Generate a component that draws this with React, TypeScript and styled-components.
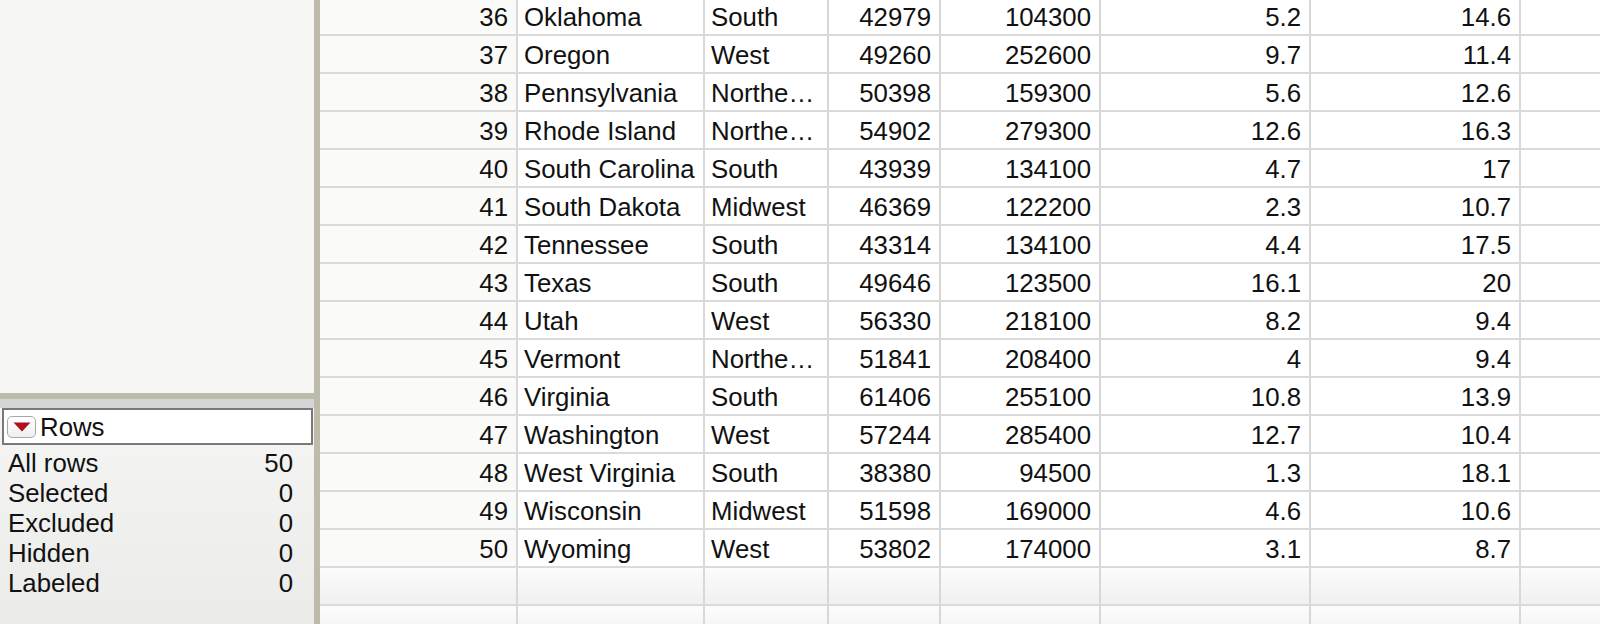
import React from "react";
import styled, { createGlobalStyle } from "styled-components";

const GlobalStyle = createGlobalStyle`
  html, body { margin: 0; padding: 0; }
  body {
    width: 1600px;
    height: 624px;
    overflow: hidden;
    font-family: "Liberation Sans", Arial, Helvetica, sans-serif;
    color: #111;
  }
`;

const Page = styled.div`
  display: flex;
  width: 1600px;
  height: 624px;
  overflow: hidden;
  font-size: 25.8px;
`;

const LeftPanel = styled.div`
  width: 314px;
  flex: none;
  display: flex;
  flex-direction: column;
`;

const TopArea = styled.div`
  height: 393px;
  flex: none;
  background: #f6f6f4;
`;

const HSplitter = styled.div`
  height: 6px;
  flex: none;
  background: #bdbcab;
`;

const HeaderStrip = styled.div`
  height: 9px;
  flex: none;
  background: #d5d5d7;
`;

const LowerPanel = styled.div`
  flex: 1;
  display: flex;
  flex-direction: column;
  padding: 0 1px 0 2px;
  background: linear-gradient(#f5f5f3, #ebebe9);
`;

const OutlineBox = styled.div`
  height: 37px;
  box-sizing: border-box;
  border: 2px solid #787878;
  background: #fff;
  display: flex;
  align-items: center;
  gap: 4px;
  padding: 2px 0 0 3px;
`;

const DisclosureButton = styled.span`
  width: 29px;
  height: 22px;
  box-sizing: border-box;
  border: 1.5px solid #a8a8a8;
  border-radius: 5px;
  background: linear-gradient(#ffffff, #efefef);
  display: flex;
  align-items: center;
  justify-content: center;
  margin-top: -2px;
`;

const StatList = styled.div`
  display: flex;
  flex-direction: column;
  padding: 3px 20px 0 6px;
`;

const StatRow = styled.div`
  display: flex;
  justify-content: space-between;
  height: 30px;
  line-height: 30px;
`;

const VDivider = styled.div`
  width: 6px;
  flex: none;
  background: #bdbcab;
`;

const Grid = styled.div`
  flex: 1;
  display: flex;
  flex-direction: column;
  margin-top: -2px;
  background: #fff;
`;

const Row = styled.div<{ $empty?: boolean }>`
  display: flex;
  height: 38px;
  flex: none;
  box-sizing: border-box;
  border-bottom: 2px solid #dadada;
  background: ${(p) => (p.$empty ? "linear-gradient(#fcfcfc, #f0f0f0)" : "#fff")};
`;

const Cell = styled.div<{ $w?: number; $align?: "left" | "right"; $head?: boolean }>`
  ${(p) => (p.$w ? `width: ${p.$w}px; flex: none;` : "flex: 1;")}
  box-sizing: border-box;
  border-right: ${(p) => (p.$w ? "2px solid #d8d8d8" : "none")};
  display: flex;
  align-items: center;
  justify-content: ${(p) => (p.$align === "right" ? "flex-end" : "flex-start")};
  padding: ${(p) => (p.$align === "right" ? "2px 8px 0 0" : "2px 0 0 6px")};
  white-space: nowrap;
  overflow: hidden;
  background: ${(p) => (p.$head ? "rgba(246,246,243,0.6)" : "transparent")};
`;

const cols: { w?: number; align: "left" | "right" }[] = [
  { w: 198, align: "right" },
  { w: 187, align: "left" },
  { w: 124, align: "left" },
  { w: 112, align: "right" },
  { w: 160, align: "right" },
  { w: 210, align: "right" },
  { w: 210, align: "right" },
  { align: "left" },
];

const data: string[][] = [
  ["36", "Oklahoma", "South", "42979", "104300", "5.2", "14.6"],
  ["37", "Oregon", "West", "49260", "252600", "9.7", "11.4"],
  ["38", "Pennsylvania", "Northe…", "50398", "159300", "5.6", "12.6"],
  ["39", "Rhode Island", "Northe…", "54902", "279300", "12.6", "16.3"],
  ["40", "South Carolina", "South", "43939", "134100", "4.7", "17"],
  ["41", "South Dakota", "Midwest", "46369", "122200", "2.3", "10.7"],
  ["42", "Tennessee", "South", "43314", "134100", "4.4", "17.5"],
  ["43", "Texas", "South", "49646", "123500", "16.1", "20"],
  ["44", "Utah", "West", "56330", "218100", "8.2", "9.4"],
  ["45", "Vermont", "Northe…", "51841", "208400", "4", "9.4"],
  ["46", "Virginia", "South", "61406", "255100", "10.8", "13.9"],
  ["47", "Washington", "West", "57244", "285400", "12.7", "10.4"],
  ["48", "West Virginia", "South", "38380", "94500", "1.3", "18.1"],
  ["49", "Wisconsin", "Midwest", "51598", "169000", "4.6", "10.6"],
  ["50", "Wyoming", "West", "53802", "174000", "3.1", "8.7"],
];

const stats: [string, number][] = [
  ["All rows", 50],
  ["Selected", 0],
  ["Excluded", 0],
  ["Hidden", 0],
  ["Labeled", 0],
];

export default function App() {
  return (
    <>
      <GlobalStyle />
      <Page>
        <LeftPanel>
          <TopArea />
          <HSplitter />
          <HeaderStrip />
          <LowerPanel>
            <OutlineBox>
              <DisclosureButton>
                <svg width="18" height="10" viewBox="0 0 18 10">
                  <path d="M0.5 0.5 L17.5 0.5 L9 9.5 Z" fill="#b0101b" />
                </svg>
              </DisclosureButton>
              <span>Rows</span>
            </OutlineBox>
            <StatList>
              {stats.map(([label, v]) => (
                <StatRow key={label}>
                  <span>{label}</span>
                  <span>{v}</span>
                </StatRow>
              ))}
            </StatList>
          </LowerPanel>
        </LeftPanel>
        <VDivider />
        <Grid>
          {data.map((r) => (
            <Row key={r[0]}>
              {cols.map((c, i) => (
                <Cell key={i} $w={c.w} $align={c.align} $head={i === 0}>
                  {r[i] ?? ""}
                </Cell>
              ))}
            </Row>
          ))}
          {[0, 1].map((k) => (
            <Row key={"e" + k} $empty>
              {cols.map((c, i) => (
                <Cell key={i} $w={c.w} $align={c.align} />
              ))}
            </Row>
          ))}
        </Grid>
      </Page>
    </>
  );
}
